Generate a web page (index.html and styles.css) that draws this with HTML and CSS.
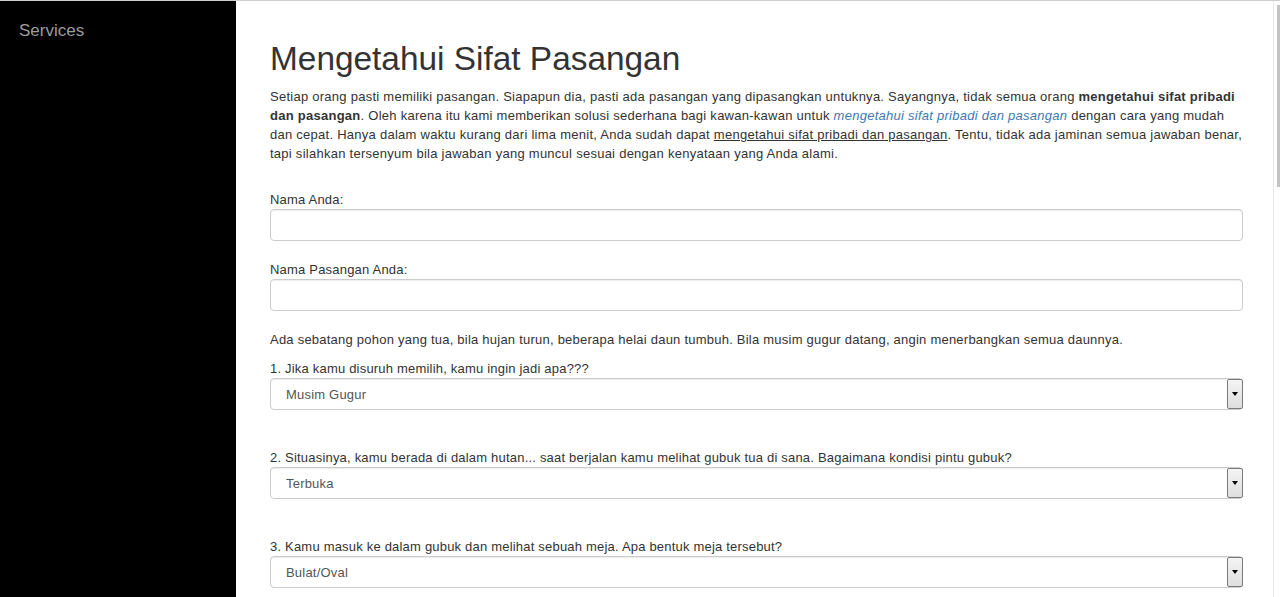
FILE: index.html
```html
<!DOCTYPE html>
<html lang="id">
<head>
<meta charset="utf-8">
<title>Mengetahui Sifat Pasangan</title>
<link rel="stylesheet" href="styles.css">
</head>
<body>
<nav class="sidebar">
  <a class="side-link" href="#">Services</a>
</nav>
<main class="main">
  <h1 class="title">Mengetahui Sifat Pasangan</h1>
  <p class="intro">Setiap orang pasti memiliki pasangan. Siapapun dia, pasti ada pasangan yang dipasangkan untuknya. Sayangnya, tidak semua orang <b>mengetahui sifat pribadi dan pasangan</b>. Oleh karena itu kami memberikan solusi sederhana bagi kawan-kawan untuk <a class="link" href="#"><i>mengetahui sifat pribadi dan pasangan</i></a> dengan cara yang mudah dan cepat. Hanya dalam waktu kurang dari lima menit, Anda sudah dapat <u>mengetahui sifat pribadi dan pasangan</u>. Tentu, tidak ada jaminan semua jawaban benar, tapi silahkan tersenyum bila jawaban yang muncul sesuai dengan kenyataan yang Anda alami.</p>

  <form class="form">
    <div class="group">
      <label class="label">Nama Anda:</label>
      <input class="control" type="text">
    </div>
    <div class="group">
      <label class="label">Nama Pasangan Anda:</label>
      <input class="control" type="text">
    </div>
    <p class="story">Ada sebatang pohon yang tua, bila hujan turun, beberapa helai daun tumbuh. Bila musim gugur datang, angin menerbangkan semua daunnya.</p>
    <div class="question">
      <label class="label">1. Jika kamu disuruh memilih, kamu ingin jadi apa???</label>
      <div class="select-wrap">
        <select class="control select"><option>Musim Gugur</option></select>
        <span class="select-arrow"></span>
      </div>
    </div>
    <div class="question">
      <label class="label">2. Situasinya, kamu berada di dalam hutan... saat berjalan kamu melihat gubuk tua di sana. Bagaimana kondisi pintu gubuk?</label>
      <div class="select-wrap">
        <select class="control select"><option>Terbuka</option></select>
        <span class="select-arrow"></span>
      </div>
    </div>
    <div class="question">
      <label class="label">3. Kamu masuk ke dalam gubuk dan melihat sebuah meja. Apa bentuk meja tersebut?</label>
      <div class="select-wrap">
        <select class="control select"><option>Bulat/Oval</option></select>
        <span class="select-arrow"></span>
      </div>
    </div>
  </form>
</main>
<div class="scrollbar"><div class="thumb"></div></div>
</body>
</html>
```

FILE: styles.css
```css
* { box-sizing: border-box; }

html, body {
  margin: 0;
  height: 597px;
  overflow: hidden;
}

body {
  display: flex;
  border-top: 1px solid #cfcfcf;
  background: #fff;
  font-family: "Liberation Sans", Arial, sans-serif;
  font-size: 13px;
  line-height: 19px;
  letter-spacing: 0.2px;
  color: #333;
}

.sidebar {
  flex: 0 0 236px;
  background: #000;
  padding: 20px 19px;
}

.side-link {
  display: block;
  font-size: 17px;
  line-height: 20px;
  letter-spacing: 0;
  color: #9d9d9d;
  text-decoration: none;
}

.main {
  flex: 0 0 1038px;
  padding: 40px 30px 0 34px;
  border-right: 1px solid #e6e6e6;
}

.title {
  margin: 0 0 10px;
  font-size: 33.4px;
  line-height: 36px;
  letter-spacing: 0;
  font-weight: 400;
  color: #333;
}

.intro {
  margin: 0;
  letter-spacing: 0.26px;
}

.intro b { font-weight: 700; }

.link {
  color: #3d7ab3;
  text-decoration: none;
}

.form {
  margin-top: 25px;
}

.group {
  margin-bottom: 17px;
}

.label {
  display: block;
  padding-top: 2px;
  margin-bottom: 0;
  font-weight: 400;
}

.control {
  display: block;
  width: 100%;
  height: 32px;
  margin: 0;
  padding: 0 15px;
  border: 1px solid #ccc;
  border-radius: 4px;
  background: #fff;
  box-shadow: inset 0 1px 1px rgba(0, 0, 0, 0.075);
  font-family: inherit;
  font-size: 13px;
  letter-spacing: 0.2px;
  color: #555;
}

.story {
  margin: 0 0 8px;
  padding-top: 2px;
  letter-spacing: 0.23px;
}

.question {
  margin-bottom: 36px;
}

.select-wrap {
  position: relative;
}

.select {
  appearance: none;
  -webkit-appearance: none;
  padding-left: 15px;
}

.select-arrow {
  position: absolute;
  top: 1px;
  bottom: 1px;
  right: 0;
  width: 16px;
  border: 1px solid #7a7a7a;
  border-radius: 2px;
  background: linear-gradient(#f4f4f4, #dedede);
}

.select-arrow::after {
  content: "";
  position: absolute;
  left: 4px;
  top: 12px;
  border-left: 3.5px solid transparent;
  border-right: 3.5px solid transparent;
  border-top: 4px solid #000;
}

.scrollbar {
  flex: 0 0 6px;
  padding: 4px 0 0 3px;
  background: #fff;
}

.thumb {
  width: 3px;
  height: 182px;
  background: #c4c4c4;
}
```
